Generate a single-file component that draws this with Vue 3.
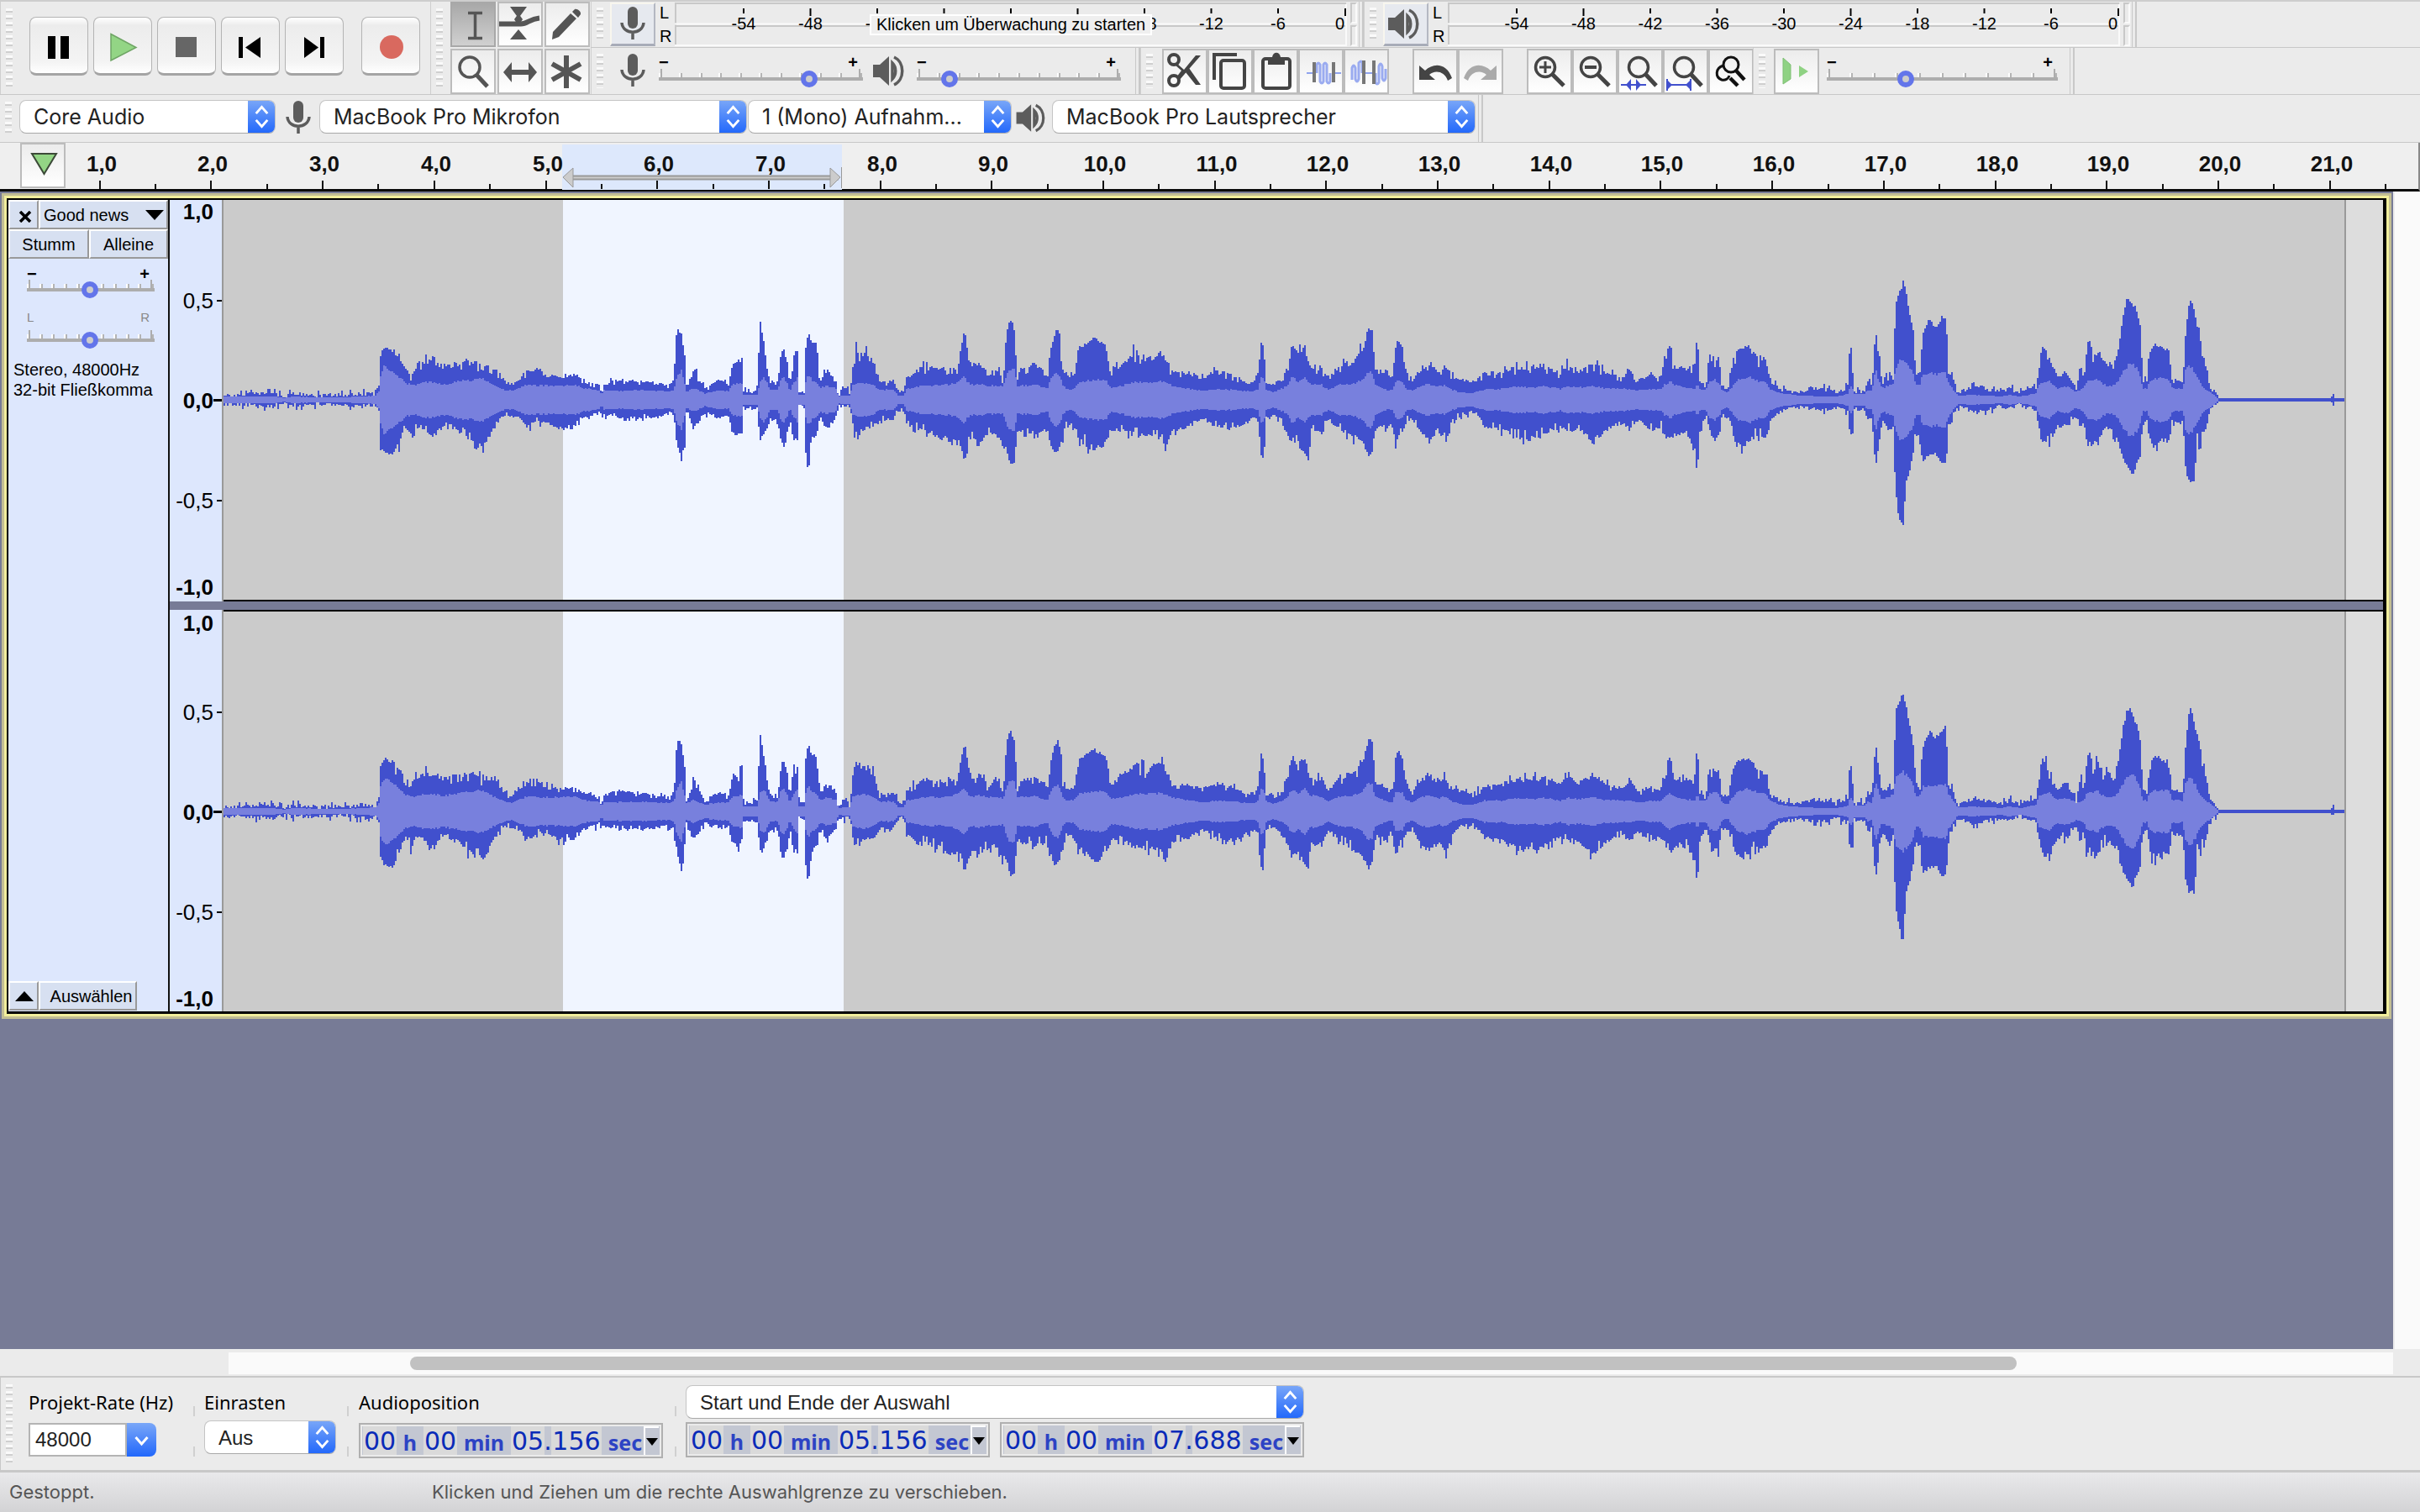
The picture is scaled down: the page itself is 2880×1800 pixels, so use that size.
<script setup>
import { h } from 'vue'

/* ---------- icons ---------- */
const icons = {
  pause: '<path d="M22 23h9v27h-9zM37 23h10v27h-10z" fill="#000"/>',
  play: '<path d="M21 20.500L51 36.500L21 52z" fill="#93d585" stroke="#6fa565" stroke-width="1.500"/>',
  stop: '<path d="M22 24h25v24h-25z" fill="#666"/>',
  toStart: '<path d="M21 24h5v25h-5zM47 24v25L29 36.500z" fill="#000"/>',
  toEnd: '<path d="M42 24h5v25h-5zM23 24v25L40 36.500z" fill="#000"/>',
  record: '<circle cx="36" cy="36" r="14" fill="#d9695f"/>',
  ibeam: '<path d="M21 13.500h17M21 43.500h17M29.500 13v31" stroke="#555" stroke-width="3.500" fill="none"/>',
  envelope: '<path d="M15 6h20l-8 11h-4zM25 33l10 12H15zM25 14l5 7-5 8-5-8z" fill="#555"/><path d="M2 26.500h26c8 0 10-6 22-7" stroke="#555" stroke-width="6" fill="none"/>',
  pencil: '<path d="M9 45l1-9L31 14l7 6L17 42zM33 12l3-3c3-1 8 3 7 6l-3 4z" fill="#555"/>',
  zoom: '<ellipse cx="23" cy="22" rx="12" ry="12" fill="none" stroke="#555" stroke-width="3.500"/><path d="M31 31l13 14" stroke="#555" stroke-width="5"/>',
  shift: '<path d="M7 28l10-12v9h20v-9l10 12-10 12v-9H17v9z" fill="#555"/>',
  multi: '<path d="M26 8v39M9 18l34 19M43 18L9 37" stroke="#555" stroke-width="6" fill="none"/>',
  cut: '<g fill="none" stroke="#444" stroke-width="4"><circle cx="14" cy="13" r="6"/><circle cx="14" cy="38" r="6"/></g><path d="M17 17L26 25 40 8h6L20 38l-3-4 6-8-8-7zM28 28l4-5 14 20h-6z" fill="#444"/>',
  copy: '<path d="M8 37V7h27" fill="none" stroke="#444" stroke-width="4"/><rect x="16" y="14" width="28" height="33" rx="3" fill="none" stroke="#444" stroke-width="4"/>',
  paste: '<rect x="12" y="12" width="32" height="35" rx="3" fill="none" stroke="#444" stroke-width="4"/><path d="M18 10h5c1-7 9-7 10 0h5v9H18z" fill="#444"/>',
  trim: '<path d="M10 29h9M42 29h9" stroke="#8fa3ee" stroke-width="2"/><path d="M22 29v-10q2-4 4 0v20q2 4 4 0v-20q2-4 4 0v20q2 4 4 0v-10" stroke="#9aabf0" stroke-width="3" fill="none"/><path d="M19 16v24M42 16v24" stroke="#777" stroke-width="4"/>',
  silence: '<path d="M24 29h12" stroke="#8fa3ee" stroke-width="2"/><path d="M10 37V23q2-6 4 0v13q2 6 4 0V17q3-4 4 0v12M38 29v11q2 4 4 0V21q2-6 4 0v14q2 6 4 0V24" stroke="#9aabf0" stroke-width="3" fill="none"/><path d="M24 14v28M36 14v28" stroke="#777" stroke-width="4"/>',
  undo: '<path d="M8 20v17h19l-7-6c6-6 18-5 22 7l5-3C41 17 25 16 15 26z" fill="#444"/>',
  redo: '<path d="M46 20v17H27l7-6c-6-6-18-5-22 7l-5-3C13 17 29 16 39 26z" fill="#aaa"/>',
  zoomIn: '<circle cx="22" cy="22" r="11.500" fill="none" stroke="#444" stroke-width="3.500"/><path d="M30 30l14 14" stroke="#444" stroke-width="5"/><path d="M15 22h14M22 15v14" stroke="#444" stroke-width="3"/>',
  zoomOut: '<circle cx="22" cy="22" r="11.500" fill="none" stroke="#444" stroke-width="3.500"/><path d="M30 30l14 14" stroke="#444" stroke-width="5"/><path d="M15 22h14" stroke="#444" stroke-width="4"/>',
  fitSel: '<circle cx="25" cy="22" r="11.500" fill="none" stroke="#444" stroke-width="3.500"/><path d="M33 30l13 14" stroke="#444" stroke-width="5"/><path d="M4 43h30" stroke="#4150cd" stroke-width="2"/><path d="M10 43l6-7v14zM28 43l-6-7v14z" fill="#4150cd"/>',
  fitAll: '<circle cx="25" cy="22" r="11.500" fill="none" stroke="#444" stroke-width="3.500"/><path d="M33 30l13 14" stroke="#444" stroke-width="5"/><path d="M4 43h30M5 36v14M33 36v14" stroke="#4150cd" stroke-width="2"/><path d="M11 43l-6-6v12zM27 43l6-6v12z" fill="#4150cd"/>',
  zoomToggle: '<g fill="none" stroke="#111" stroke-width="3"><circle cx="27" cy="19" r="9"/><path d="M18 20c-10 3-10 14-2 17 4 1 8-1 9-5"/></g><path d="M33 26l10 11M26 35l9 9" stroke="#111" stroke-width="4.500"/>',
  playSpeed: '<path d="M11 11l9 8v17l-9 6z" fill="#8fd283" stroke="#7fbf75"/><path d="M30 20l11 7-11 7z" fill="#8fd283"/>',
  mic: '<rect x="21" y="6" width="12" height="26" rx="6" fill="#5c5c5c"/><path d="M14 25c1 15 25 15 26 0M27 36v9" fill="none" stroke="#5c5c5c" stroke-width="3.500"/>',
  speaker: '<path d="M6 19h8l11-10v35L14 34H6z" fill="#5c5c5c"/><path d="M29 17c5 5 5 14 0 19zM31 10c13 6 13 27 0 33" fill="none" stroke="#5c5c5c" stroke-width="3.500"/>',
}
const Icon = (props) =>
  h('svg', { viewBox: props.box || '0 0 54 54', 'aria-hidden': 'true', innerHTML: icons[props.name] })
Icon.props = ['name', 'box']

const Arrows = () =>
  h('svg', { viewBox: '0 0 34 40', 'aria-hidden': 'true' }, [
    h('path', { d: 'M10 16l7-8 7 8M10 24l7 8 7-8', fill: 'none', stroke: '#fff', 'stroke-width': 3 }),
  ])

const transport = [
  ['pause', 'Pause'], ['play', 'Wiedergabe'], ['stop', 'Stopp'],
  ['toStart', 'Zum Anfang'], ['toEnd', 'Zum Ende'], ['record', 'Aufnahme'],
]
const tools = [
  ['ibeam', 'Auswahl'], ['envelope', 'Hüllkurve'], ['pencil', 'Zeichnen'],
  ['zoom', 'Zoom'], ['shift', 'Verschieben'], ['multi', 'Multi'],
]
const editGroups = [
  [['cut', 'Ausschneiden'], ['copy', 'Kopieren'], ['paste', 'Einfügen'], ['trim', 'Trimmen'], ['silence', 'Stille']],
  [['undo', 'Rückgängig'], ['redo', 'Wiederholen']],
  [['zoomIn', 'Vergrößern'], ['zoomOut', 'Verkleinern'], ['fitSel', 'Auswahl einpassen'], ['fitAll', 'Projekt einpassen'], ['zoomToggle', 'Zoom umschalten']],
]

/* ---------- level meters ---------- */
const marks = ['-54', '-48', '-42', '-36', '-30', '-24', '-18', '-12', '-6']
const meterX = (i) => 82 + i * 79.500
/* the hint on the recording meter leaves only the rims of its neighbours visible */
const meters = [
  { icon: 'mic', name: 'Aufnahmepegel', labels: ['-54', '-48', '-', '', '', '', '8', '-12', '-6'] },
  { icon: 'speaker', name: 'Wiedergabepegel', labels: marks },
]
const labelX = (text, i) => meterX(i) + (text === '-' ? -11 : text === '8' ? 9 : 0)

/* ---------- timeline ---------- */
const pxPerSecond = 132.700
const timelineX = (t) => Math.round(t * pxPerSecond - 92)
const halfSeconds = Array.from({ length: 42 }, (_, i) => 1 + i / 2).filter((t) => t <= 21.500)
const label = (t) => t.toFixed(1).replace('.', ',')

/* ---------- waveform: x, peak up, peak down, rms ---------- */
const env = [
  266,5,6,4, 290,6,6,4, 307,9,8,4, 325,8,8,4, 338,4,4,2, 347,8,7,4, 380,6,6,3, 410,6,6,3, 428,8,8,4, 446,7,7,5, 450,18,14,10,
  452,58,57,30, 457,65,66,42, 466,60,67,34, 474,54,54,28, 481,36,31,20, 489,29,46,18, 494,41,32,18, 502,48,34,21, 512,46,47,21,
  530,40,29,19, 548,46,41,23, 565,47,57,24, 573,38,56,25, 581,42,47,21, 591,34,27,16, 601,22,17,11, 609,19,21,11, 616,25,22,14,
  627,37,34,18, 637,39,27,17, 652,29,29,17, 665,29,35,17, 685,30,34,18, 693,22,22,14, 713,18,16,11, 715,6,14,5, 717,19,17,11,
  734,25,22,11, 767,22,22,12, 797,18,17,10, 801,24,20,12, 803,64,41,20, 805,91,52,29, 810,80,74,36, 814,56,50,19, 816,13,14,10, 825,38,36,14,
  838,12,15,8, 854,24,22,11, 866,19,19,11, 871,43,41,19, 882,48,42,19, 884,10,11,6, 901,12,11,6, 903,100,52,22, 908,70,46,26,
  912,41,37,20, 915,20,24,12, 925,21,25,12, 928,53,49,24, 931,65,55,28, 936,50,49,20, 939,16,24,10, 943,53,49,20, 948,60,51,26,
  950,12,8,6, 956,11,10,6, 958,66,64,22, 961,82,89,31, 965,68,46,24, 971,69,44,20, 975,21,22,14, 983,37,37,17, 994,21,21,14,
  997,4,7,4, 1004,18,9,5, 1011,5,7,5, 1013,39,27,18, 1017,60,43,19, 1030,56,35,20, 1040,45,32,17, 1045,21,24,12, 1063,23,24,12,
  1068,11,9,5, 1075,11,9,5, 1078,26,31,13, 1096,40,36,17, 1114,37,43,17, 1132,40,53,19, 1139,40,52,21, 1143,66,54,26, 1147,86,76,28,
  1151,57,60,21, 1155,42,48,18, 1165,46,55,19, 1175,31,43,17, 1185,40,41,17, 1193,24,57,16, 1197,83,60,30, 1201,101,78,36,
  1206,88,76,36, 1210,26,37,17, 1213,37,37,17, 1231,44,40,18, 1246,29,37,14, 1249,58,51,24, 1253,77,65,31, 1259,90,62,32,
  1264,39,44,18, 1268,29,28,13, 1277,29,32,13, 1283,64,47,21, 1302,76,62,24, 1315,67,52,24, 1321,32,36,15, 1335,47,38,17,
  1349,58,42,21, 1366,50,45,21, 1379,60,47,22, 1386,52,61,21, 1394,34,38,17, 1409,34,34,14, 1430,27,23,11, 1447,35,33,13,
  1468,29,35,12, 1486,20,26,10, 1491,20,20,10, 1497,36,27,14, 1499,72,64,28, 1503,65,74,28, 1506,21,21,12, 1514,19,19,9,
  1524,25,25,13, 1532,45,45,18, 1537,68,58,28, 1544,54,52,21, 1552,66,65,28, 1556,47,72,21, 1560,40,38,19, 1572,40,42,18,
  1580,25,23,12, 1593,42,35,18, 1608,45,45,19, 1616,55,51,22, 1622,65,57,26, 1628,90,70,34, 1633,82,62,31, 1635,38,36,18,
  1652,29,32,11, 1657,29,28,12, 1659,62,60,22, 1663,74,45,24, 1668,64,42,22, 1673,33,25,13, 1680,25,24,11, 1690,38,42,17,
  1700,46,50,19, 1710,35,38,16, 1719,42,51,18, 1728,29,30,12, 1736,25,18,9, 1753,22,15,8, 1766,32,32,13, 1787,34,38,13,
  1802,39,45,16, 1828,41,48,15, 1835,42,42,17, 1856,33,33,13, 1866,45,36,16, 1879,35,38,15, 1895,45,52,17, 1909,34,37,14,
  1930,27,28,13, 1939,40,36,13, 1947,25,25,11, 1965,29,37,13, 1976,28,32,13, 1980,50,45,18, 1987,70,52,22, 1991,40,42,18,
  2007,38,42,14, 2016,43,62,14, 2019,82,94,19, 2022,23,37,13, 2029,18,21,12, 2033,54,35,21, 2039,50,48,24, 2045,49,47,21,
  2048,19,21,12, 2055,12,22,8, 2059,39,31,14, 2066,61,58,23, 2080,66,52,28, 2089,51,43,23, 2101,49,43,21, 2105,23,27,13,
  2118,13,13,8, 2142,9,9,5, 2151,14,11,5, 2165,15,13,4, 2186,9,9,4, 2198,16,14,7, 2201,64,44,17, 2204,33,44,13, 2206,10,11,7,
  2218,11,12,7, 2222,25,25,12, 2227,16,21,10, 2231,86,84,37, 2235,53,57,22, 2239,23,24,14, 2248,32,40,18, 2252,26,31,20,
  2255,119,117,38, 2259,135,144,46, 2264,144,158,48, 2268,128,97,44, 2272,104,87,38, 2276,83,64,33, 2279,33,34,17, 2284,33,51,19,
  2287,79,74,29, 2295,98,69,32, 2303,90,66,31, 2309,100,77,33, 2315,103,78,32, 2318,33,37,21, 2324,26,17,12, 2329,8,8,5,
  2350,17,16,6, 2380,9,8,4, 2391,14,11,6, 2403,8,6,4, 2409,15,10,5, 2422,14,12,8, 2425,33,31,18, 2429,66,50,21, 2438,50,57,22,
  2447,29,32,14, 2459,34,33,16, 2470,13,17,10, 2475,43,37,12, 2479,23,24,14, 2483,70,55,22, 2487,75,56,23, 2490,49,52,24,
  2495,60,57,25, 2503,47,35,18, 2512,45,38,16, 2519,54,48,21, 2525,100,72,33, 2531,128,82,41, 2537,118,92,43, 2541,110,80,40,
  2546,90,70,29, 2549,29,27,14, 2554,21,24,13, 2557,53,51,22, 2563,70,57,25, 2570,65,48,26, 2581,57,55,24, 2584,26,27,14,
  2597,23,29,13, 2600,79,84,36, 2604,118,101,40, 2607,128,100,38, 2611,104,98,34, 2614,93,40,26, 2617,84,67,21, 2620,54,37,16,
  2625,43,37,12, 2629,15,11,10, 2635,9,6,5, 2640,2,2,0, 2772,2,2,0, 2775,8,6,0, 2778,2,2,0, 2792,2,2,0,
]
const mid = 238
function wave(seed) {
  let s = seed
  const rnd = () => ((s = (s * 16807) % 2147483647) / 2147483647)
  const up = [], down = [], rms = []
  let k = 0
  for (let x = 266; x < 2790; x += 2) {
    while (k + 8 < env.length && env[k + 4] <= x) k += 4
    const f = Math.min(1, (x - env[k]) / (env[k + 4] - env[k]))
    const at = (j) => env[k + j] + (env[k + 4 + j] - env[k + j]) * f
    const quiet = at(1) < 3
    const peak = (v) => {
      if (quiet) return Math.round(v)
      const r = rnd()
      if (v > 60) return Math.round(v * (0.940 + rnd() * 0.060))
      if (v < 18) return Math.max(3, Math.round(v + (r > 0.900 ? 5 : rnd() * 5 - 3)))
      return Math.round(v * (r > 0.930 ? 1.150 : r < 0.100 ? 0.780 : 0.880 + rnd() * 0.170))
    }
    up.push(peak(at(1)))
    down.push(peak(at(2)))
    rms.push(Math.round(at(3) * (quiet ? 1 : 0.930 + rnd() * 0.120)))
  }
  const outline = (a, b) => {
    let d = `M0 ${mid}`
    a.forEach((v) => (d += `V${mid - v}h2`))
    for (let i = b.length - 1; i >= 0; i--) d += `V${mid + b[i]}h-2`
    return d + 'z'
  }
  return { peak: outline(up, down), rms: outline(rms, rms) }
}
const channels = [wave(4711), wave(90210)]
const scale = ['1,0', '0,5', '0,0', '-0,5', '-1,0']
const spans = [['05', '156'], ['07', '688']]
</script>

<template>
  <div class="app">
    <header class="docks">
      <div class="dock-row">
        <section class="bar transport">
          <i class="grip"></i>
          <button v-for="[n, t] in transport" :key="n" class="big" :class="n" :aria-label="t"><Icon :name="n" box="0 0 70 70" /></button>
        </section>
        <section class="bar toolbox">
          <i class="grip"></i>
          <div class="tool-grid">
            <button v-for="[n, t] in tools" :key="n" class="tile" :class="{ on: n === 'ibeam' }" :aria-label="t"><Icon :name="n" /></button>
          </div>
        </section>
        <div class="stack">
          <div class="line">
            <template v-for="(m, mi) in meters" :key="m.icon">
              <section class="bar meter-bar">
                <i class="grip"></i>
                <button class="meter-btn" :aria-label="m.name"><Icon :name="m.icon" /></button>
                <div class="lr"><span>L</span><span>R</span></div>
                <div class="meter">
                  <svg class="meter-scale" width="800" height="52">
                    <path d="M1 52V1H799" class="dark" /><path d="M0 25.500H800" class="light" /><path d="M0 28H800" class="dark mid" /><path d="M0 51H799V2" class="light" />
                    <g v-for="(v, i) in marks" :key="v">
                      <path :d="`M${meterX(i)} 7v${v === '-48' || v === '-24' ? 9 : 6}`" class="tick" />
                      <text v-if="m.labels[i]" :x="labelX(m.labels[i], i)" y="32" text-anchor="middle">{{ m.labels[i] }}</text>
                    </g>
                    <path d="M798 7v9" class="tick" />
                    <text x="797" y="32" text-anchor="end">0</text>
                  </svg>
                  <span v-if="!mi" class="hint">Klicken um Überwachung zu starten</span>
                </div>
                <div class="clip"><i></i><i></i></div>
              </section>
              <i class="gutter"></i>
            </template>
          </div>
          <div class="line">
            <section class="bar mixer">
              <i class="grip"></i>
              <Icon class="glyph" name="mic" />
              <label class="fader"><span class="pm"><b>−</b><b>+</b></span><input type="range" value="76" aria-label="Aufnahmelautstärke" /></label>
              <Icon class="glyph" name="speaker" />
              <label class="fader"><span class="pm"><b>−</b><b>+</b></span><input type="range" value="13" aria-label="Wiedergabelautstärke" /></label>
            </section>
            <i class="gutter"></i>
            <section class="bar edit">
              <i class="grip"></i>
              <div v-for="(g, gi) in editGroups" :key="gi" class="group">
                <button v-for="[n, t] in g" :key="n" class="tile" :aria-label="t"><Icon :name="n" /></button>
              </div>
            </section>
            <section class="bar speed">
              <i class="grip"></i>
              <button class="tile" aria-label="Wiedergabe mit Geschwindigkeit"><Icon name="playSpeed" /></button>
              <label class="fader wide"><span class="pm"><b>−</b><b>+</b></span><input type="range" value="33" aria-label="Geschwindigkeit" /></label>
            </section>
            <i class="gutter"></i>
          </div>
        </div>
      </div>
      <div class="dock-row devices">
        <i class="grip"></i>
        <label class="pick host"><select aria-label="Audio-Host"><option>Core Audio</option></select><Arrows class="arrows" /></label>
        <Icon class="glyph" name="mic" />
        <label class="pick input"><select aria-label="Aufnahmegerät"><option>MacBook Pro Mikrofon</option></select><Arrows class="arrows" /></label>
        <label class="pick chan"><select aria-label="Aufnahmekanäle"><option>1 (Mono) Aufnahm...</option></select><Arrows class="arrows" /></label>
        <Icon class="glyph out" name="speaker" />
        <label class="pick output"><select aria-label="Wiedergabegerät"><option>MacBook Pro Lautsprecher</option></select><Arrows class="arrows" /></label>
        <i class="gutter"></i>
      </div>
    </header>

    <div class="timeline">
      <button class="tile pin" aria-label="Abspielkopf"><svg viewBox="0 0 54 54" aria-hidden="true"><path d="M14 13h29L28.500 37z" fill="#93d585" stroke="#3c4a38" stroke-width="2" /></svg></button>
      <svg class="ruler" height="56">
        <rect x="591" y="2" width="333" height="54" fill="#dde8fc" />
        <path d="M600 41.500H920" stroke="#999" stroke-width="6" /><path d="M600 41.500H920" stroke="#ccc" stroke-width="2" />
        <path d="M592 41l12-11v23zM922 41l-12-11v23z" fill="#ccc" stroke="#999" stroke-width="1" /><path d="M923.500 29v25" stroke="#999" stroke-width="1" />
        <g v-for="t in halfSeconds" :key="t">
          <path :d="t % 1 ? `M${timelineX(t)} 49v6` : `M${timelineX(t)} 45v10`" stroke="#111" stroke-width="2" />
          <text v-if="t % 1 === 0" :x="timelineX(t) + 2" y="34" text-anchor="middle">{{ label(t) }}</text>
        </g>
      </svg>
    </div>

    <main class="workspace">
      <div class="tracks">
        <article class="track">
          <aside class="panel">
            <div class="prow title-row">
              <button class="pbtn close" aria-label="Schließen"><svg viewBox="0 0 16 14" aria-hidden="true"><path d="M2 1l12 12M14 1L2 13" stroke="#000" stroke-width="3.500" /></svg></button>
              <button class="pbtn name">Good news<svg viewBox="0 0 22 12" aria-hidden="true"><path d="M0 0h22L11 12z" /></svg></button>
            </div>
            <div class="prow"><button class="pbtn half">Stumm</button><button class="pbtn half">Alleine</button></div>
            <label class="fader small"><span class="pm"><b>−</b><b>+</b></span><input type="range" value="49" aria-label="Verstärkung" /></label>
            <label class="fader small pan"><span class="pm lrs"><span>L</span><span>R</span></span><input type="range" value="49" aria-label="Balance" /></label>
            <p class="info">Stereo, 48000Hz<br />32-bit Fließkomma</p>
            <div class="prow foot">
              <button class="pbtn fold" aria-label="Einklappen"><svg viewBox="0 0 22 12" aria-hidden="true"><path d="M0 12h22L11 0z" /></svg></button>
              <button class="pbtn sel">Auswählen</button>
            </div>
          </aside>
          <div class="channels">
            <div v-for="(c, i) in channels" :key="i" class="channel">
              <div class="vscale"><span v-for="(v, j) in scale" :key="v" :class="{ strong: j % 2 === 0, mark: j > 0 && j < 4 }">{{ v }}</span></div>
              <div class="canvas">
                <svg width="2524" height="476" shape-rendering="crispEdges" role="img" aria-label="Wellenform">
                  <rect x="404" width="334" height="476" fill="#f0f5ff" />
                  <path :d="c.peak" fill="#4150cd" />
                  <path :d="c.rms" fill="#7880dd" />
                  <path d="M2374 238H2524" stroke="#4150cd" stroke-width="4" />
                </svg>
              </div>
            </div>
          </div>
        </article>
      </div>
      <div class="vscroll"></div>
    </main>
    <div class="hscroll"><div class="rail"><i></i></div></div>

    <section class="selection-bar">
      <i class="grip"></i>
      <div class="field rate">
        <label for="rate">Projekt-Rate (Hz)</label>
        <div class="combo"><input id="rate" value="48000" /><button aria-label="Rate wählen"><svg viewBox="0 0 34 40" aria-hidden="true"><path d="M10 17l7 8 7-8" fill="none" stroke="#fff" stroke-width="3" /></svg></button></div>
      </div>
      <i class="split"></i>
      <div class="field snap">
        <label for="snap">Einrasten</label>
        <div class="pick"><select id="snap"><option>Aus</option></select><Arrows class="arrows" /></div>
      </div>
      <i class="split"></i>
      <div class="field pos">
        <span>Audioposition</span>
        <div class="time"><b>00</b><em>h</em><b>00</b><em>min</em><b>05</b><s>.</s><b>156</b><em>sec</em><button aria-label="Format"><svg viewBox="0 0 14 9" aria-hidden="true"><path d="M0 0h14L7 9z" /></svg></button></div>
      </div>
      <i class="split"></i>
      <div class="field range">
        <div class="pick"><select aria-label="Auswahlmodus"><option>Start und Ende der Auswahl</option></select><Arrows class="arrows" /></div>
        <div class="times">
          <div v-for="[a, z] in spans" :key="a" class="time"><b>00</b><em>h</em><b>00</b><em>min</em><b>{{ a }}</b><s>.</s><b>{{ z }}</b><em>sec</em><button aria-label="Format"><svg viewBox="0 0 14 9" aria-hidden="true"><path d="M0 0h14L7 9z" /></svg></button></div>
        </div>
      </div>
    </section>
    <footer class="status"><span class="state">Gestoppt.</span><span>Klicken und Ziehen um die rechte Auswahlgrenze zu verschieben.</span></footer>
  </div>
</template>

<style>
body { margin: 0; background: #ebebeb; }
</style>

<style scoped>
.app { min-height: 100vh; display: flex; flex-direction: column; background: #ebebeb; color: #000; font: 20px/24px "Liberation Sans", Arial, sans-serif; overflow: hidden; }
.app * { box-sizing: border-box; }
svg { display: block; flex: none; }
button { font: inherit; color: inherit; padding: 0; margin: 0; border: 0; flex: none; }

.grip { flex: none; width: 8px; align-self: stretch; margin: 8px 0 8px 6px; background: repeating-linear-gradient(#fafafa 0 3px, #cfcfcf 3px 5px, transparent 5px 8px); }
.gutter { flex: none; width: 6px; border: solid #c8c8c8; border-width: 0 2px 0 1px; align-self: stretch; }
.docks { border-top: 2px solid #cdcdcd; }
.dock-row { display: flex; border-bottom: 1px solid #c8c8c8; }
.bar { display: flex; align-items: center; border-left: 1px solid #cfcfcf; flex: none; }
.transport { width: 512px; height: 110px; gap: 6px; padding-bottom: 4px; }
.transport .grip { margin-right: 14px; margin-bottom: 4px; }
.big { width: 70px; height: 70px; border-radius: 8px; border: 1px solid #b4b4b4; border-bottom: 3px solid #a4a4a4; background: linear-gradient(#fff, #ececec 14%, #f4f4f4 80%, #fff); }
.big svg { width: 70px; height: 70px; margin: -1px; }
.record { margin-left: 15px; }
.toolbox { width: 191px; }
.tool-grid { display: grid; grid-template-columns: repeat(3, 54px); gap: 2px; margin-left: 9px; }
.tile { width: 54px; height: 54px; border: 2px solid #bcbcbc; background: linear-gradient(#ececec, #fff); }
.tile svg { width: 54px; height: 54px; margin: -2px; }
.tile.on { background: linear-gradient(#a8a8a8, #d0d0d0); border-color: #a8a8a8; }
.stack { flex: 1; min-width: 0; }
.line { display: flex; height: 55px; }
.line:first-child { border-bottom: 1px solid #c8c8c8; }
.line .grip { margin-top: 7px; margin-bottom: 7px; }
.meter-bar { width: 914px; }
.meter-btn { width: 54px; height: 52px; margin-left: 8px; background: #e6e9ef; border: solid; border-width: 2px 2px 3px 2px; border-color: #f8f6ee #b4b8c2 #a8acb8 #f8f6ee; }
.meter-btn svg { width: 54px; height: 54px; margin: -4px -2px; }
.lr { width: 18px; margin-left: 5px; display: flex; flex-direction: column; gap: 4px; }
.meter { position: relative; width: 800px; height: 52px; }
.meter-scale text { font-size: 20px; fill: #000; }
.dark { stroke: #c8c8c8; stroke-width: 2; fill: none; }
.light { stroke: #fafafa; stroke-width: 2; fill: none; }
.tick { stroke: #000; stroke-width: 2; }
.hint { position: absolute; left: 29%; top: 14px; height: 25px; padding: 0 6px; line-height: 21px; background: #efefef; border: 2px solid #fff; white-space: nowrap; }
.clip { width: 8px; height: 52px; margin-left: 4px; display: flex; flex-direction: column; gap: 2px; }
.clip i { flex: 1; border: 2px solid #c8c8c8; border-right-color: #fafafa; border-bottom-color: #fafafa; }
.glyph { width: 54px; height: 54px; }
.mixer { width: 648px; }
.mixer .glyph { margin-left: 8px; }
.mixer .glyph + .fader { margin-left: 4px; }
.mixer .fader + .glyph { margin-left: 6px; }
.fader { width: 243px; display: flex; flex-direction: column; flex: none; }
.pm { display: flex; justify-content: space-between; height: 12px; line-height: 12px; padding: 0 6px 0 0; }
.fader input { appearance: none; -webkit-appearance: none; width: 100%; height: 22px; margin: 0; background:
  linear-gradient(#adadad, #adadad) 0 12px / 100% 4px no-repeat,
  linear-gradient(#adadad, #adadad) 2px 2px / 2px 10px no-repeat,
  linear-gradient(#adadad, #adadad) calc(100% - 3px) 2px / 2px 10px no-repeat,
  repeating-linear-gradient(90deg, #fff 0 2px, #b4b4b4 2px 4px, transparent 4px calc((100% - 5px) / 10)) 0 7px / 100% 5px no-repeat; }
.fader input::-webkit-slider-thumb { -webkit-appearance: none; width: 20px; height: 20px; border-radius: 50%; border: 6px solid #6375ea; background: #ccc; margin-top: 6px; }
.wide { width: 275px; margin-left: 9px; }
.edit { width: 729px; }
.edit .group { display: flex; margin-left: 28px; }
.edit .grip + .group { margin-left: 11px; }
.speed { width: 377px; }
.speed .tile { margin-left: 10px; }

.devices { height: 57px; align-items: center; padding-bottom: 4px; }
.devices .grip { margin-bottom: 4px; }
.pick { display: flex; height: 40px; border-radius: 8px; background: #fff; border: 1px solid #c4c4c4; border-bottom-color: #a8a8a8; overflow: hidden; flex: none; }
.pick select { flex: 1; min-width: 0; appearance: none; border: 0; background: transparent; padding: 0 0 0 16px; margin: 0; font: 25px/36px Inter, "Noto Sans", sans-serif; color: #222; }
.arrows { width: 33px; height: 40px; margin: -1px; background: linear-gradient(#7aa7f8, #2167fb); }
.host { width: 305px; margin-left: 9px; }
.devices .glyph { margin: 4px -2px 0 0; }
.input { width: 509px; }
.chan { width: 314px; margin-left: 1px; }
.devices .out { width: 50px; }
.output { width: 504px; }
.devices .gutter { margin: 0 0 -4px 3px; }

.timeline { display: flex; height: 58px; background: #efefef; border-bottom: 3px solid #0a0a0a; border-right: 2px solid #888; }
.pin { margin-left: 24px; }
.ruler { flex: 1; min-width: 0; overflow: hidden; }
.ruler text { font-weight: bold; font-size: 26px; fill: #111; }

.workspace { flex: 1; display: flex; background: #777b96; }
.tracks { flex: 1; min-width: 0; padding: 2px 2px 0 2px; }
.vscroll { width: 32px; background: #fafafa; border-left: 2px solid #ececec; }
.track { display: flex; border: 2px solid #000; border-bottom-width: 3px; border-right-width: 4px; outline: 3px solid #f1ee9c; box-shadow: 0 0 0 6px #c2be94; margin: 6px; }
.panel { width: 192px; flex: none; background: #dde7fd; border-right: 2px solid #111; display: flex; flex-direction: column; }
.prow { display: flex; }
.pbtn { background: #d7e0f1; border: 2px solid #fff; border-right-color: #999; border-bottom-color: #999; height: 35px; display: flex; align-items: center; justify-content: center; }
.close { width: 36px; padding-left: 4px; }
.close svg { width: 16px; height: 14px; margin-top: 4px; }
.name { flex: 1; justify-content: space-between; padding: 0 3px 0 4px; }
.name svg, .fold svg { width: 22px; height: 12px; }
.half { flex: 1; }
.half:first-child { flex: 0 0 96px; }
.small { width: 152px; margin: 14px 0 0 22px; }
.small .pm { height: 9px; line-height: 9px; padding-right: 6px; }
.pan { margin-top: 20px; }
.small .lrs { font-size: 15px; color: #888; height: 18px; }
.info { margin: 15px 0 0 6px; white-space: nowrap; }
.foot { margin-top: auto; padding-bottom: 1px; }
.fold { width: 36px; padding-left: 2px; }
.sel { width: 117px; padding-left: 8px; }
.channels { flex: 1; min-width: 0; display: flex; flex-direction: column; gap: 10px; background: #777b96; }
.channel { display: flex; }
.vscale { width: 64px; flex: none; height: 478px; display: grid; grid-template-rows: 60px 119px 119px 119px 59px; background: #dde7fd; border-right: 2px solid #999; font-size: 26px; }
.channel + .channel .vscale { padding-top: 2px; }
.vscale span { display: flex; align-items: center; justify-content: flex-end; padding-right: 10px; }
.vscale .mark { padding-right: 0; gap: 4px; }
.vscale .mark::after { content: ""; width: 6px; height: 2px; background: #000; }
.vscale .mark.strong { gap: 0; }
.vscale .mark.strong::after { width: 10px; height: 3px; }
.vscale span:first-child { align-items: flex-start; padding-top: 2px; }
.vscale span:last-child { align-items: flex-end; padding-bottom: 3px; }
.strong { font-weight: bold; }
.canvas { flex: 1; min-width: 0; overflow: hidden; background: #ddd; border-bottom: 2px solid #000; }
.channel + .channel .canvas { border-top: 2px solid #000; border-bottom: 0; }
.canvas svg { background: #cbcbcb; outline: 2px solid #999; }

.hscroll { height: 32px; padding: 4px 32px 2px 272px; border-bottom: 0; }
.rail { height: 26px; background: #fafafa; padding: 5px 0; }
.rail i { display: block; width: 74.2%; margin-left: 8.4%; height: 16px; border-radius: 8px; background: #c1c1c1; }

.selection-bar { display: flex; height: 115px; border: solid #c8c8c8; border-width: 2px 0 3px 1px; }
.field { display: flex; flex-direction: column; font: 22px/28px "Noto Sans", "Open Sans", sans-serif; padding-top: 15px; gap: 11px; flex: none; }
.combo { display: flex; width: 152px; height: 40px; }
.combo input { flex: 1; min-width: 0; border: 2px solid #b4b4b4; background: #fff; padding: 0 0 0 6px; font: 24px "Liberation Sans", Arial, sans-serif; color: #222; }
.combo button { width: 35px; border-radius: 0 8px 8px 0; background: linear-gradient(#7aa7f8, #2167fb); }
.combo svg { width: 35px; height: 40px; }
.split { flex: none; width: 2px; margin: 34px 0 16px; background: linear-gradient(#d0d0d0 12px, transparent 12px calc(100% - 12px), #d0d0d0 calc(100% - 12px)); }
.rate { width: 196px; margin-left: 19px; }
.snap { width: 157px; margin: 0 13px 0 11px; gap: 8px; }
.snap select, .range select { font: 24px "Liberation Sans", Arial, sans-serif; }
.pos { width: 363px; margin: 0 13px 0 12px; }
.time { display: flex; align-items: stretch; width: 362px; height: 42px; border: 2px solid #b0b0b0; padding: 2px 3px; background: #c3c7d2; box-shadow: inset 0 0 0 2px #ebebeb; color: #0a2bb8; }
.time b { font: 30px/36px "DejaVu Sans", sans-serif; background: #dadada; width: 40px; text-align: center; }
.time s { width: 8px; font: 30px/36px "DejaVu Sans", sans-serif; text-decoration: none; display: flex; justify-content: center; }
.time s + b { width: 60px; }
.time em { font: bold 25px/38px "Noto Sans", sans-serif; color: #2d43c4; width: 32px; text-align: center; }
.time b + em:nth-of-type(2) { width: 64px; }
.time em:nth-of-type(3) { flex: 1; padding-left: 6px; }
.time button { width: 18px; border: solid #fff; border-width: 2px 0 0 2px; background: #c3c7d2; display: flex; align-items: center; justify-content: center; }
.time button svg { width: 14px; height: 9px; }
.range { margin-left: 11px; padding-top: 9px; gap: 4px; }
.range .pick { width: 736px; }
.times { display: flex; gap: 12px; }
.status { display: flex; align-items: center; height: 47px; padding: 0 11px 2px; background: linear-gradient(#e9e9eb, #d3d3d5); color: #555; font: 22px/28px Inter, "Noto Sans", sans-serif; white-space: nowrap; }
.state { width: 503px; }
</style>
